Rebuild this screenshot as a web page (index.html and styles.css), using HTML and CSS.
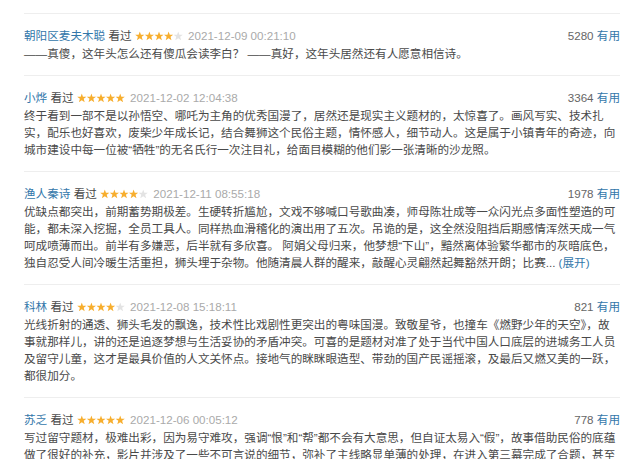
FILE: index.html
```html
<!DOCTYPE html>
<html lang="zh-CN">
<head>
    <meta charset="UTF-8">
    <title>短评</title>
    <link rel="stylesheet" href="styles.css">
</head>
<body>
    <svg class="defs" width="0" height="0">
        <symbol id="star" viewBox="0 0 10 10">
            <polygon points="5,0.3 6.2,3.6 9.8,3.7 7,5.9 8,9.5 5,7.4 2,9.5 3,5.9 0.2,3.7 3.8,3.6"/>
        </symbol>
    </svg>

    <ul class="comments">
        <li class="comment">
            <div class="comment-info">
                <span class="meta">
                    <a class="user" href="#">朝阳区麦夫木聪</a>
                    <span class="status">看过</span>
                    <svg class="stars" viewBox="0 0 50 10">
                        <use href="#star" x="0" width="10" height="10" class="on"/>
                        <use href="#star" x="10" width="10" height="10" class="on"/>
                        <use href="#star" x="20" width="10" height="10" class="on"/>
                        <use href="#star" x="30" width="10" height="10" class="on"/>
                        <use href="#star" x="40" width="10" height="10" class="off"/>
                    </svg>
                    <span class="time">2021-12-09 00:21:10</span>
                </span>
                <span class="votes"><span class="count">5280</span> <a href="#">有用</a></span>
            </div>
            <p class="short">——真傻，这年头怎么还有傻瓜会读李白？ ——真好，这年头居然还有人愿意相信诗。</p>
        </li>

        <li class="comment">
            <div class="comment-info">
                <span class="meta">
                    <a class="user" href="#">小烨</a>
                    <span class="status">看过</span>
                    <svg class="stars" viewBox="0 0 50 10">
                        <use href="#star" x="0" width="10" height="10" class="on"/>
                        <use href="#star" x="10" width="10" height="10" class="on"/>
                        <use href="#star" x="20" width="10" height="10" class="on"/>
                        <use href="#star" x="30" width="10" height="10" class="on"/>
                        <use href="#star" x="40" width="10" height="10" class="on"/>
                    </svg>
                    <span class="time">2021-12-02 12:04:38</span>
                </span>
                <span class="votes"><span class="count">3364</span> <a href="#">有用</a></span>
            </div>
            <p class="short">终于看到一部不是以孙悟空、哪吒为主角的优秀国漫了，居然还是现实主义题材的，太惊喜了。画风写实、技术扎实，配乐也好喜欢，废柴少年成长记，结合舞狮这个民俗主题，情怀感人，细节动人。这是属于小镇青年的奇迹，向城市建设中每一位被“牺牲”的无名氏行一次注目礼，给面目模糊的他们影一张清晰的沙龙照。</p>
        </li>

        <li class="comment">
            <div class="comment-info">
                <span class="meta">
                    <a class="user" href="#">渔人秦诗</a>
                    <span class="status">看过</span>
                    <svg class="stars" viewBox="0 0 50 10">
                        <use href="#star" x="0" width="10" height="10" class="on"/>
                        <use href="#star" x="10" width="10" height="10" class="on"/>
                        <use href="#star" x="20" width="10" height="10" class="on"/>
                        <use href="#star" x="30" width="10" height="10" class="on"/>
                        <use href="#star" x="40" width="10" height="10" class="off"/>
                    </svg>
                    <span class="time">2021-12-11 08:55:18</span>
                </span>
                <span class="votes"><span class="count">1978</span> <a href="#">有用</a></span>
            </div>
            <p class="short">优缺点都突出，前期蓄势期极差。生硬转折尴尬，文戏不够喊口号歌曲凑，师母陈壮成等一众闪光点多面性塑造的可能，都未深入挖掘，全员工具人。同样热血滑稽化的演出用了五次。吊诡的是，这全然没阻挡后期感情浑然天成一气呵成喷薄而出。前半有多嫌恶，后半就有多欣喜。 阿娟父母归来，他梦想“下山”，黯然离体验繁华都市的灰暗底色，独自忍受人间冷暖生活重担，狮头埋于杂物。他随清晨人群的醒来，敲醒心灵翩然起舞豁然开朗；比赛... <a class="unfold" href="#">(展开)</a></p>
        </li>

        <li class="comment">
            <div class="comment-info">
                <span class="meta">
                    <a class="user" href="#">科林</a>
                    <span class="status">看过</span>
                    <svg class="stars" viewBox="0 0 50 10">
                        <use href="#star" x="0" width="10" height="10" class="on"/>
                        <use href="#star" x="10" width="10" height="10" class="on"/>
                        <use href="#star" x="20" width="10" height="10" class="on"/>
                        <use href="#star" x="30" width="10" height="10" class="on"/>
                        <use href="#star" x="40" width="10" height="10" class="off"/>
                    </svg>
                    <span class="time">2021-12-08 15:18:11</span>
                </span>
                <span class="votes"><span class="count">821</span> <a href="#">有用</a></span>
            </div>
            <p class="short">光线折射的通透、狮头毛发的飘逸，技术性比戏剧性更突出的粤味国漫。致敬星爷，也撞车《燃野少年的天空》，故事就那样儿，讲的还是追逐梦想与生活妥协的矛盾冲突。可喜的是题材对准了处于当代中国人口底层的进城务工人员及留守儿童，这才是最具价值的人文关怀点。接地气的眯眯眼造型、带劲的国产民谣摇滚，及最后又燃又美的一跃，都很加分。</p>
        </li>

        <li class="comment">
            <div class="comment-info">
                <span class="meta">
                    <a class="user" href="#">苏乏</a>
                    <span class="status">看过</span>
                    <svg class="stars" viewBox="0 0 50 10">
                        <use href="#star" x="0" width="10" height="10" class="on"/>
                        <use href="#star" x="10" width="10" height="10" class="on"/>
                        <use href="#star" x="20" width="10" height="10" class="on"/>
                        <use href="#star" x="30" width="10" height="10" class="on"/>
                        <use href="#star" x="40" width="10" height="10" class="on"/>
                    </svg>
                    <span class="time">2021-12-06 00:05:12</span>
                </span>
                <span class="votes"><span class="count">778</span> <a href="#">有用</a></span>
            </div>
            <p class="short">写过留守题材，极难出彩，因为易守难攻，强调“恨”和“帮”都不会有大意思，但自证太易入“假”，故事借助民俗的底蕴做了很好的补充，影片并涉及了一些不可言说的细节，弥补了主线略显单薄的处理，在进入第三幕完成了合题，甚至让人忘了它是一部动画。</p>
        </li>
    </ul>
</body>
</html>
```

FILE: styles.css
```css
body {
    margin: 0;
    padding: 13px 20px 0 24px;
    background: #fff;
    font-family: "Liberation Sans", "Noto Sans CJK SC", sans-serif;
    font-size: 11.6px;
    color: #494949;
}

a {
    color: #37a;
    text-decoration: none;
}

.defs {
    position: absolute;
}

.comments {
    list-style: none;
    margin: 0;
    padding: 0;
}

.comment {
    border-top: 1px solid #eee;
    padding: 12px 0 13px;
}

.comment-info {
    display: flex;
    justify-content: space-between;
    align-items: center;
    line-height: 19px;
}

.status {
    color: #494949;
}

.stars {
    width: 48px;
    height: 10px;
    vertical-align: -1px;
}

.stars .on {
    fill: #f7ae2e;
}

.stars .off {
    fill: #e3e3e3;
}

.time {
    color: #aaa;
    margin-left: 2px;
}

.count {
    color: #666;
}

.short {
    margin: 0;
    line-height: 17px;
}
```
